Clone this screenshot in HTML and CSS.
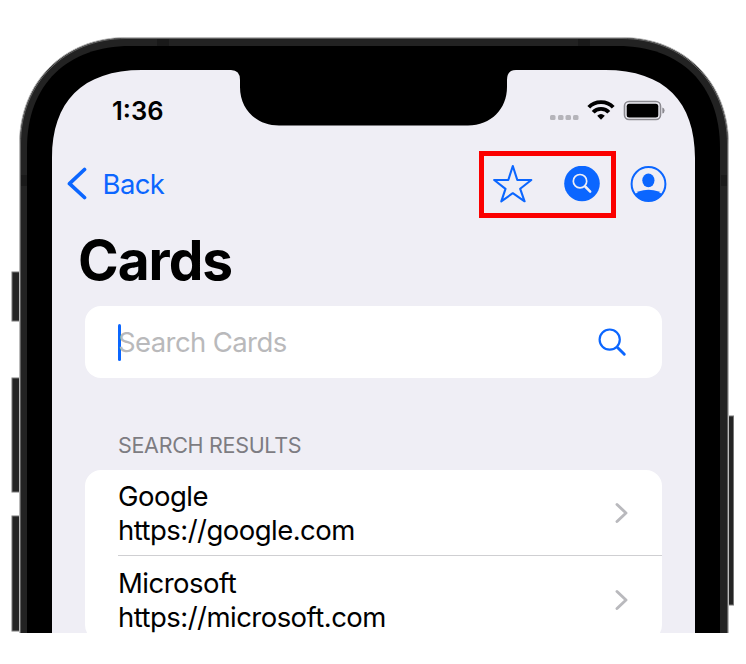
FILE: index.html
```html
<!DOCTYPE html>
<html lang="en">
<head>
<meta charset="utf-8">
<title>Cards</title>
<link rel="stylesheet" href="styles.css">
</head>
<body>
<div class="stage">
  <svg class="device" width="746" height="633" viewBox="0 0 746 633" aria-hidden="true">
    <g fill="#242424" stroke="#777" stroke-width="1">
      <rect x="12" y="272" width="10" height="49"/>
      <rect x="12" y="378" width="10" height="114"/>
      <rect x="12" y="516" width="10" height="115"/>
      <rect x="724" y="416" width="9.500" height="189"/>
    </g>
    <path d="M19.500 640V144C19.500 82 64 37.500 126 37.500H622C684 37.500 728.500 82 728.500 144V640Z" fill="#222" stroke="#bbb"/>
    <path d="M20.500 640V144C20.500 83 65 38.500 126 38.500H622C683 38.500 727.500 83 727.500 144V640" fill="none" stroke="#606060"/>
    <path d="M157 39h12v7h-12zM578 39h12v7h-12zM21 175h6v11h-6zM721 175h6v11h-6z" fill="#191919"/>
    <path d="M27 640V148C27 84 68 46 130 46H618C680 46 720 84 720 148V640Z" fill="#000"/>
    <path d="M52 640V158C52 102 82 70 142 70H231Q240 70 240 80V87C240 109 256 125.500 279 125.500H468C491 125.500 507 109 507 87V80Q507 70 516 70H605C665 70 695 102 695 158V640Z" fill="#efeef5"/>
  </svg>
  <main class="screen">
    <div class="status">
      <span class="time">1:36</span>
      <svg class="signals" width="118" height="28" viewBox="548 97 118 28">
        <g fill="#b5b4ba"><rect x="550" y="115" width="5.500" height="5" rx="1.500"/><rect x="558" y="115" width="5.500" height="5" rx="1.500"/><rect x="565.500" y="115" width="5.500" height="5" rx="1.500"/><rect x="573" y="115" width="5.500" height="5" rx="1.500"/></g>
        <g fill="none" stroke="#000" stroke-width="3.800"><path d="M588.800 107.300C595 100.300 607 100.300 613.200 107.300"/><path d="M593.200 112.300C597 107.800 605 107.800 608.800 112.300"/></g>
        <path d="M597.200 115.700Q601 112.500 604.800 115.700L601 119.800Z" fill="#000"/>
        <rect x="624.500" y="101.500" width="36" height="18" rx="4.500" fill="none" stroke="#8b8a90" stroke-width="1.600"/>
        <rect x="626.700" y="103.800" width="31.600" height="13.700" rx="2.500" fill="#000"/>
        <path d="M662.300 107.500Q664.600 108 664.600 110.500T662.300 113.500Z" fill="#8b8a90"/>
      </svg>
    </div>
    <nav class="nav">
      <div class="back">
        <svg width="20" height="34" viewBox="67 167 20 34"><path d="M84.500 169.500L69.500 183.700L84.500 197.500" fill="none" stroke="#0b66ff" stroke-width="3.700" stroke-linecap="round" stroke-linejoin="round"/></svg>
        <span>Back</span>
      </div>
      <div class="actions">
        <div class="highlight">
          <svg width="42" height="42" viewBox="492 163 42 42"><path d="M512.800 166L517.300 180H531.300L520.200 188.800L524.600 201.300L512.800 193.200L501.300 201.300L505.500 188.800L494.200 180H508.300Z" fill="none" stroke="#0b66ff" stroke-width="2.100" stroke-linejoin="round"/></svg>
          <svg width="36" height="36" viewBox="564 166 36 36"><circle cx="582" cy="183.500" r="17.800" fill="#0b66ff"/><g fill="none" stroke="#efeef5"><circle cx="580" cy="181.200" r="6.700" stroke-width="1.700"/><path d="M585.200 186.500L590.200 191.600" stroke-width="2.500" stroke-linecap="round"/></g></svg>
        </div>
        <svg width="37" height="37" viewBox="630 165.500 37 37"><defs><clipPath id="avatar"><circle cx="648.500" cy="183.500" r="17"/></clipPath></defs><g fill="#0b66ff" clip-path="url(#avatar)"><ellipse cx="648.400" cy="179.800" rx="6.100" ry="6.900"/><path d="M634 202V195.500Q637.500 189.300 648.500 189.300T663 195.500V202Z"/></g><circle cx="648.500" cy="183.500" r="16.900" fill="none" stroke="#0b66ff" stroke-width="2"/></svg>
      </div>
    </nav>
    <h1>Cards</h1>
    <div class="search">
      <span class="caret"></span><span class="placeholder">Search Cards</span>
      <svg width="30" height="30" viewBox="597 327 30 30"><g fill="none" stroke="#0b66ff" stroke-linecap="round"><circle cx="609.700" cy="339.600" r="10.100" stroke-width="2.200"/><path d="M617.500 347.500L624.300 354.300" stroke-width="2.900"/></g></svg>
    </div>
    <h2>SEARCH RESULTS</h2>
    <div class="results">
      <div class="row"><div class="card"><p>Google</p><p class="url">https://google.com</p></div><svg width="14" height="22" viewBox="0 0 14 22"><path d="M2 2.500L11 11L2 19.500" fill="none" stroke="#b9b9bd" stroke-width="2.900" stroke-linecap="round" stroke-linejoin="round"/></svg></div>
      <div class="row"><div><p>Microsoft</p><p class="url">https://microsoft.com</p></div><svg width="14" height="22" viewBox="0 0 14 22"><path d="M2 2.500L11 11L2 19.500" fill="none" stroke="#b9b9bd" stroke-width="2.900" stroke-linecap="round" stroke-linejoin="round"/></svg></div>
    </div>
  </main>
</div>
</body>
</html>
```
FILE: styles.css
```css
* { box-sizing: border-box; }
body { margin: 0; background: #fff; font-family: Inter, "Liberation Sans", sans-serif; color: #000; }
h1, h2, p { margin: 0; }
svg { display: block; flex: none; }
.stage { position: relative; width: 746px; height: 633px; overflow: hidden; }
.device { position: absolute; inset: 0; }
.screen { position: relative; width: 643px; margin-left: 52px; padding-top: 97px; }
.status { display: flex; justify-content: space-between; align-items: center; height: 28px; padding: 0 29px 0 60px; }
.time { font-size: 25.500px; font-weight: 600; line-height: 28px; letter-spacing: 0; }
.nav { display: flex; justify-content: space-between; align-items: center; height: 68px; margin-top: 25px; padding: 0 28px 0 15px; color: #0b66ff; }
.back { display: flex; align-items: center; gap: 15.500px; font-size: 27.500px; letter-spacing: -0.600px; }
.actions { display: flex; align-items: center; gap: 14px; }
.highlight { display: flex; align-items: center; justify-content: space-between; width: 137px; height: 67px; border: 5.500px solid #fb0000; padding: 0 11px 0 8px; }
h1 { margin: 8px 0 0 26px; font-size: 55px; line-height: 68px; font-weight: 700; letter-spacing: -1px; }
.search { display: flex; align-items: center; height: 72px; margin: 12px 33px 0; padding: 0 35px 0 33px; background: #fff; border-radius: 16px; }
.caret { width: 3px; height: 37px; margin-right: -3px; background: #0b66ff; border-radius: 2px; }
.placeholder { flex: 1; color: #b9b9bb; font-size: 27.500px; letter-spacing: -0.600px; }
h2 { margin: 53px 0 0 66px; height: 39px; font-size: 21.500px; line-height: 28px; font-weight: 400; letter-spacing: -0.300px; color: #7d7c82; }
.results { height: 171px; margin: 0 33px; padding-left: 33px; background: #fff; border-radius: 16px; }
.row { display: flex; align-items: center; justify-content: space-between; height: 85px; padding-right: 33px; }
.row + .row { height: 89px; border-top: 1px solid #cfcfd2; }
.card { padding-top: 2px; }
.row p { font-size: 27.500px; line-height: 33px; letter-spacing: -0.500px; }
.row .url { line-height: 34px; letter-spacing: -0.530px; }
```
